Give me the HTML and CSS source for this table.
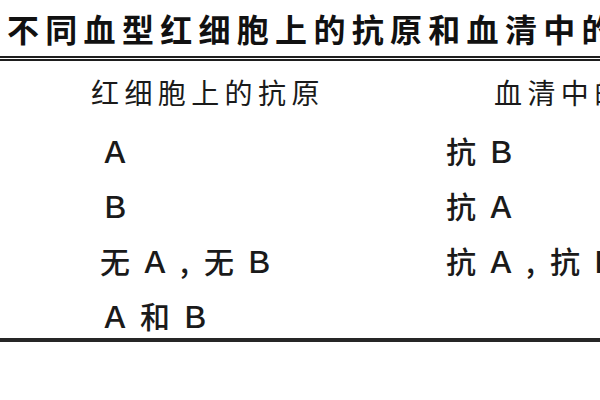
FILE: index.html
```html
<!DOCTYPE html>
<html lang="zh">
<head>
<meta charset="utf-8">
<link rel="stylesheet" href="styles.css">
</head>
<body>
<div class="page">
  <div class="title">不同血型红细胞上的抗原和血清中的抗体</div>
  <div class="table">
    <div class="row head">
      <div class="c1">红细胞上的抗原</div>
      <div class="c2">血清中的抗体</div>
    </div>
    <div class="row">
      <div class="c1">Ａ</div>
      <div class="c2">抗Ｂ</div>
    </div>
    <div class="row">
      <div class="c1">Ｂ</div>
      <div class="c2">抗Ａ</div>
    </div>
    <div class="row">
      <div class="c1">无Ａ<span class="cm">,</span>无Ｂ</div>
      <div class="c2">抗Ａ<span class="cm">,</span>抗Ｂ</div>
    </div>
    <div class="row last">
      <div class="c1">Ａ和Ｂ</div>
      <div class="c2"></div>
    </div>
  </div>
</div>
</body>
</html>
```

FILE: styles.css
```css
html, body {
  margin: 0;
  padding: 0;
  background: #ffffff;
}
.page {
  width: 600px;
  height: 400px;
  overflow: hidden;
  font-family: "Noto Sans CJK SC", "Noto Sans", sans-serif;
  color: #1a1a1a;
}
.title {
  height: 56px;
  line-height: 56px;
  padding-left: 7px;
  font-size: 32px;
  font-weight: 700;
  letter-spacing: 6.3px;
  color: #111111;
  white-space: nowrap;
  overflow: hidden;
  border-bottom: 5px double #1e1e1e;
}
.table {
  border-bottom: 4px solid #262626;
}
.row {
  display: grid;
  grid-template-columns: 446px 154px;
  height: 55px;
  line-height: 55px;
  font-size: 30px;
  font-weight: 500;
  letter-spacing: 10px;
  white-space: nowrap;
}
.row > div {
  overflow: hidden;
}
.c1 {
  padding-left: 100px;
}
.c2 {
  padding-left: 0;
}
.head {
  height: 62px;
  line-height: 62px;
  font-size: 28px;
  font-weight: 400;
  letter-spacing: 5.4px;
}
.head .c1 {
  padding-left: 91px;
}
.head .c2 {
  padding-left: 48px;
}
.last {
  height: 50px;
}
.cm {
  letter-spacing: 0;
  margin-right: 15px;
}
```
